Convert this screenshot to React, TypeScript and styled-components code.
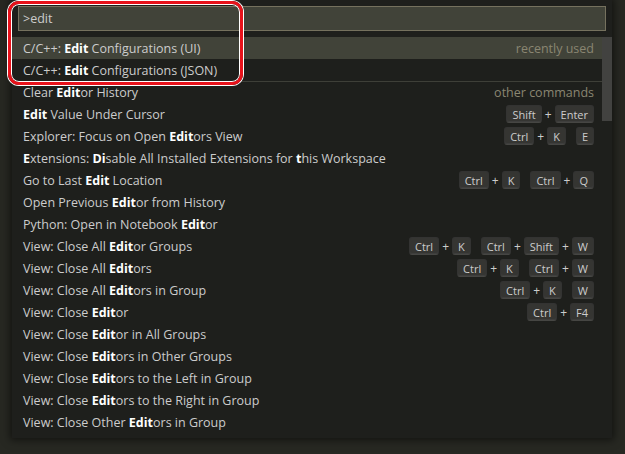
import React, {FC} from 'react';
import styled, {createGlobalStyle} from 'styled-components';

const GlobalStyle = createGlobalStyle`
  html, body {
    margin: 0;
    padding: 0;
    background: #272822;
  }
  body {
    font-family: "Open Sans", "Noto Sans", sans-serif;
  }
`;

const Page = styled.div`
  width: 625px;
  height: 454px;
  padding: 0 13px 0 12px;
  box-sizing: border-box;
  position: relative;
  overflow: hidden;
`;

const Widget = styled.div`
  width: 600px;
  height: 438px;
  box-sizing: border-box;
  background: #1e1f1c;
  box-shadow: 0 0 8px 2px rgba(0, 0, 0, 0.55);
  padding: 6px 0 5px;
  display: flex;
  flex-direction: column;
  gap: 6px;
`;

const Input = styled.div`
  margin: 0 6px;
  height: 25px;
  box-sizing: border-box;
  background: #414339;
  border: 1px solid #75715e;
  color: #cccccc;
  font-size: 12.5px;
  display: flex;
  align-items: center;
  padding-left: 4px;
`;

const List = styled.div`
  position: relative;
  display: flex;
  flex-direction: column;
`;

const Row = styled.div<{ $selected?: boolean; $separator?: boolean }>`
  height: 22px;
  box-sizing: border-box;
  display: flex;
  align-items: center;
  justify-content: space-between;
  padding: 0 8px 0 11px;
  margin-right: 10px;
  font-size: 12.5px;
  color: #cccccc;
  background: ${(p) => (p.$selected ? '#414339' : 'transparent')};
  border-top: ${(p) => (p.$separator ? '1px solid #3e3f38' : 'none')};
  white-space: nowrap;
`;

const Label = styled.span`
  b {
    color: #ffffff;
    font-weight: 700;
  }
`;

const Description = styled.span`
  color: #8a8672;
`;

const Keys = styled.span`
  display: flex;
  align-items: center;
  gap: 10px;
`;

const Chord = styled.span`
  display: flex;
  align-items: center;
`;

const Key = styled.span`
  display: inline-block;
  font-size: 11px;
  line-height: 11px;
  padding: 3px 5px 2px;
  min-width: 6px;
  text-align: center;
  border-radius: 3px;
  background: #353532;
  border: 1px solid rgba(51, 51, 51, 0.6);
  border-bottom-color: #464643;
  box-shadow: inset 0 -1px 0 rgba(68, 68, 68, 0.6);
  color: #cccccc;
`;

const Plus = styled.span`
  font-size: 12px;
  padding: 0 3px;
  color: #cccccc;
`;

const Slider = styled.div`
  position: absolute;
  right: 0;
  top: 0;
  width: 10px;
  height: 84px;
  background: rgba(121, 121, 121, 0.4);
`;

const Callout = styled.div`
  position: absolute;
  left: 8px;
  top: 1px;
  width: 235px;
  height: 84px;
  box-sizing: border-box;
  border: 3px solid #e8121b;
  border-radius: 11px;
  box-shadow: 0 0 0 1px #ffffff, inset 0 0 0 1px #ffffff;
  pointer-events: none;
`;

type Item = {
  label: React.ReactNode
  desc?: string
  keys?: string[][]
  selected?: boolean
  separator?: boolean
}

const items: Item[] = [
  {label: <>C/C++: <b>Edit</b> Configurations (UI)</>, desc: 'recently used', selected: true},
  {label: <>C/C++: <b>Edit</b> Configurations (JSON)</>},
  {label: <>Clear <b>Edit</b>or History</>, desc: 'other commands', separator: true},
  {label: <><b>Edit</b> Value Under Cursor</>, keys: [['Shift', 'Enter']]},
  {label: <>Explorer: Focus on Open <b>Edit</b>ors View</>, keys: [['Ctrl', 'K'], ['E']]},
  {label: <><b>E</b>xtensions: <b>Di</b>sable All Installed Extensions for <b>t</b>his Workspace</>},
  {label: <>Go to Last <b>Edit</b> Location</>, keys: [['Ctrl', 'K'], ['Ctrl', 'Q']]},
  {label: <>Open Previous <b>Edit</b>or from History</>},
  {label: <>Python: Open in Notebook <b>Edit</b>or</>},
  {label: <>View: Close All <b>Edit</b>or Groups</>, keys: [['Ctrl', 'K'], ['Ctrl', 'Shift', 'W']]},
  {label: <>View: Close All <b>Edit</b>ors</>, keys: [['Ctrl', 'K'], ['Ctrl', 'W']]},
  {label: <>View: Close All <b>Edit</b>ors in Group</>, keys: [['Ctrl', 'K'], ['W']]},
  {label: <>View: Close <b>Edit</b>or</>, keys: [['Ctrl', 'F4']]},
  {label: <>View: Close <b>Edit</b>or in All Groups</>},
  {label: <>View: Close <b>Edit</b>ors in Other Groups</>},
  {label: <>View: Close <b>Edit</b>ors to the Left in Group</>},
  {label: <>View: Close <b>Edit</b>ors to the Right in Group</>},
  {label: <>View: Close Other <b>Edit</b>ors in Group</>},
];

const Keybinding: FC<{ chords: string[][] }> = ({chords}) => (
  <Keys>
    {chords.map((chord, i) => (
      <Chord key={i}>
        {chord.map((k, j) => (
          <React.Fragment key={j}>
            {j > 0 && <Plus>+</Plus>}
            <Key>{k}</Key>
          </React.Fragment>
        ))}
      </Chord>
    ))}
  </Keys>
);

const App: FC = () => {
  return (
    <Page>
      <GlobalStyle/>
      <Widget>
        <Input>&gt;edit</Input>
        <List>
          {items.map((item, i) => (
            <Row key={i} $selected={item.selected} $separator={item.separator}>
              <Label>{item.label}</Label>
              {item.desc && <Description>{item.desc}</Description>}
              {item.keys && <Keybinding chords={item.keys}/>}
            </Row>
          ))}
          <Slider/>
        </List>
      </Widget>
      <Callout/>
    </Page>
  );
};

export default App;
